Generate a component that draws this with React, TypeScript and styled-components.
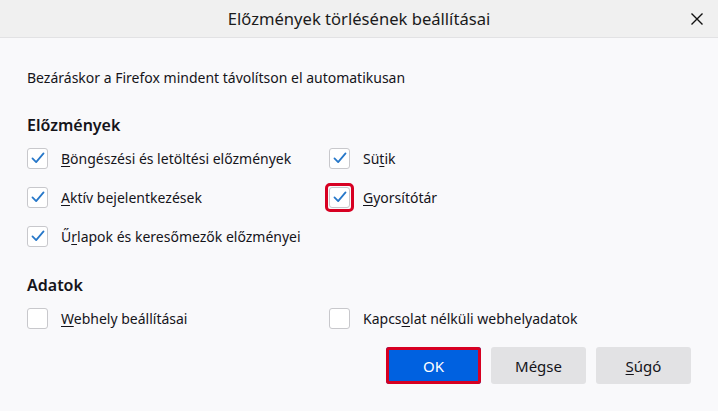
import React from "react";
import styled, { createGlobalStyle } from "styled-components";

const Global = createGlobalStyle`
  html, body { margin: 0; padding: 0; }
  body {
    width: 718px;
    height: 411px;
    overflow: hidden;
    background: #f9f9fb;
    font-family: "Noto Sans", "Open Sans", sans-serif;
    color: #15141a;
  }
`;

const Dialog = styled.div`
  width: 718px;
  height: 411px;
  display: flex;
  flex-direction: column;
  background: #f9f9fb;
`;

const TitleBar = styled.div`
  height: 37px;
  flex: none;
  display: flex;
  align-items: center;
  justify-content: center;
  position: relative;
  background: #f0f0f0;
  border-bottom: 1px solid #e2e2e4;
  font-size: 16.6px;
  color: #1b1b1b;
`;

const Close = styled.div`
  position: absolute;
  right: 15px;
  top: 13px;
  width: 12px;
  height: 12px;
  display: flex;
`;

const Body = styled.div`
  flex: 1;
  display: flex;
  flex-direction: column;
  padding: 29px 27px 0 27px;
`;

const Intro = styled.div`
  font-size: 14px;
  line-height: 22px;
`;

const Heading = styled.div<{ $top: number }>`
  margin-top: ${(p) => p.$top}px;
  font-size: 16px;
  font-weight: 600;
  line-height: 24px;
`;

const Grid = styled.div`
  display: grid;
  grid-template-columns: 302px 1fr;
  row-gap: 17px;
  margin-top: 10px;
`;

const Row = styled.label`
  display: flex;
  align-items: center;
  gap: 13px;
  font-size: 14px;
  height: 22px;
`;

const BoxWrap = styled.span<{ $hl?: boolean }>`
  display: flex;
  width: 21px;
  height: 21px;
  box-sizing: border-box;
  outline: ${(p) => (p.$hl ? "3px solid #d70022" : "none")};
  outline-offset: 1px;
  border-radius: 1px;
`;

const Box = styled.span`
  width: 21px;
  height: 21px;
  box-sizing: border-box;
  border: 1px solid #c8c8cc;
  border-radius: 3px;
  background: #fff;
  display: flex;
  align-items: center;
  justify-content: center;
`;

const U = styled.span`
  text-decoration: underline;
  text-underline-offset: 2px;
`;

const Footer = styled.div`
  display: flex;
  justify-content: flex-end;
  gap: 10px;
  margin-top: 18px;
`;

const Button = styled.button<{ $primary?: boolean }>`
  width: 95px;
  height: 37px;
  border-radius: 3px;
  font-family: "Noto Sans", "Open Sans", sans-serif;
  font-size: 15px;
  border: none;
  background: ${(p) => (p.$primary ? "#0061e0" : "#e2e2e4")};
  color: ${(p) => (p.$primary ? "#fff" : "#15141a")};
  outline: ${(p) => (p.$primary ? "3px solid #d70022" : "none")};
  outline-offset: -3px;
  padding: 0;
`;

const Check = () => (
  <svg width="14" height="12" viewBox="0 0 15 13">
    <path d="M1.5 7 L5.5 11 L13.5 1.5" fill="none" stroke="#2677c9" strokeWidth="1.9" strokeLinecap="round" strokeLinejoin="round" />
  </svg>
);

const CheckBox = ({ checked, hl }: { checked?: boolean; hl?: boolean }) => (
  <BoxWrap $hl={hl}>
    <Box>{checked && <Check />}</Box>
  </BoxWrap>
);

export default function App() {
  return (
    <>
      <Global />
      <Dialog>
        <TitleBar>
          Előzmények törlésének beállításai
          <Close>
            <svg width="12" height="12" viewBox="0 0 12 12">
              <path d="M0.5 0.5 L11.5 11.5 M11.5 0.5 L0.5 11.5" stroke="#111" strokeWidth="1.4" />
            </svg>
          </Close>
        </TitleBar>
        <Body>
          <Intro>Bezáráskor a Firefox mindent távolítson el automatikusan</Intro>
          <Heading $top={24}>Előzmények</Heading>
          <Grid>
            <Row>
              <CheckBox checked />
              <span><U>B</U>öngészési és letöltési előzmények</span>
            </Row>
            <Row>
              <CheckBox checked />
              <span>Sü<U>t</U>ik</span>
            </Row>
            <Row>
              <CheckBox checked />
              <span><U>A</U>ktív bejelentkezések</span>
            </Row>
            <Row>
              <CheckBox checked hl />
              <span><U>G</U>yorsítótár</span>
            </Row>
            <Row>
              <CheckBox checked />
              <span>Ű<U>r</U>lapok és keresőmezők előzményei</span>
            </Row>
            <span />
          </Grid>
          <Heading $top={26}>Adatok</Heading>
          <Grid>
            <Row>
              <CheckBox />
              <span><U>W</U>ebhely beállításai</span>
            </Row>
            <Row>
              <CheckBox />
              <span>Kapcs<U>o</U>lat nélküli webhelyadatok</span>
            </Row>
          </Grid>
          <Footer>
            <Button $primary>OK</Button>
            <Button>Mégse</Button>
            <Button><U>S</U>úgó</Button>
          </Footer>
        </Body>
      </Dialog>
    </>
  );
}
